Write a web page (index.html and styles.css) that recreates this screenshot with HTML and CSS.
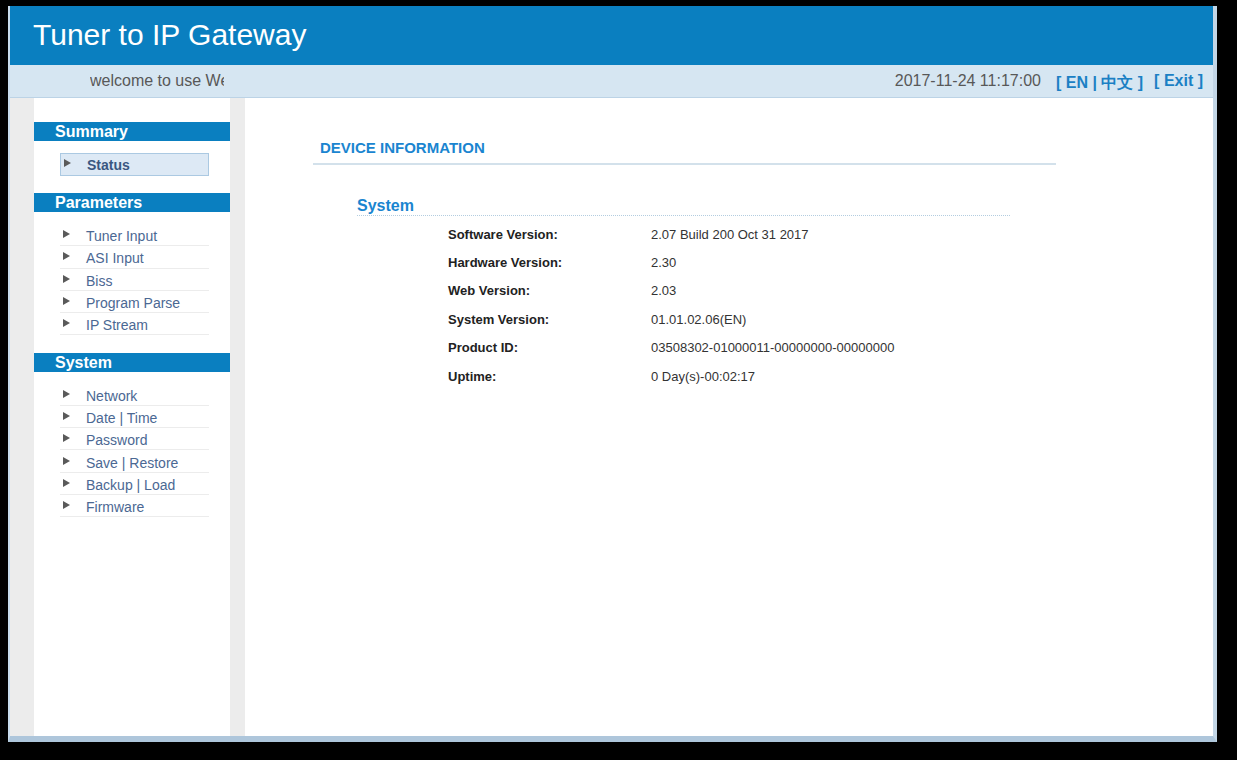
FILE: index.html
```html
<!DOCTYPE html>
<html>
<head>
<meta charset="utf-8">
<title>Tuner to IP Gateway</title>
<link rel="stylesheet" href="styles.css">
</head>
<body>
<div class="window">
  <div class="header"><span class="title">Tuner to IP Gateway</span></div>
  <div class="welcome">
    <div class="marquee"><span>welcome to use Web Management System</span></div>
    <div class="status-right">
      <span class="datetime">2017-11-24 11:17:00</span>
      <span class="lang">[ EN | 中文 ]</span>
      <span class="exit">[ Exit ]</span>
    </div>
  </div>
  <div class="main">
    <div class="gutter-left"></div>
    <div class="sidebar">
      <div class="menu-head first">Summary</div>
      <div class="menu-active"><i class="arrow"></i><span>Status</span></div>
      <div class="menu-head">Parameters</div>
      <ul class="menu-list">
        <li><i class="arrow"></i><span>Tuner Input</span></li>
        <li><i class="arrow"></i><span>ASI Input</span></li>
        <li><i class="arrow"></i><span>Biss</span></li>
        <li><i class="arrow"></i><span>Program Parse</span></li>
        <li><i class="arrow"></i><span>IP Stream</span></li>
      </ul>
      <div class="menu-head sys">System</div>
      <ul class="menu-list">
        <li><i class="arrow"></i><span>Network</span></li>
        <li><i class="arrow"></i><span>Date | Time</span></li>
        <li><i class="arrow"></i><span>Password</span></li>
        <li><i class="arrow"></i><span>Save | Restore</span></li>
        <li><i class="arrow"></i><span>Backup | Load</span></li>
        <li><i class="arrow"></i><span>Firmware</span></li>
      </ul>
    </div>
    <div class="gutter-mid"></div>
    <div class="content">
      <div class="section-title">DEVICE INFORMATION</div>
      <div class="sub-title">System</div>
      <div class="info">
        <div class="row"><span class="label">Software Version:</span><span class="value">2.07 Build 200 Oct 31 2017</span></div>
        <div class="row"><span class="label">Hardware Version:</span><span class="value">2.30</span></div>
        <div class="row"><span class="label">Web Version:</span><span class="value">2.03</span></div>
        <div class="row"><span class="label">System Version:</span><span class="value">01.01.02.06(EN)</span></div>
        <div class="row"><span class="label">Product ID:</span><span class="value">03508302-01000011-00000000-00000000</span></div>
        <div class="row"><span class="label">Uptime:</span><span class="value">0 Day(s)-00:02:17</span></div>
      </div>
    </div>
  </div>
</div>
</body>
</html>
```
FILE: styles.css
```css
* { box-sizing: border-box; }
html, body { margin: 0; padding: 0; }
body {
  background: #000;
  font-family: "Liberation Sans", Arial, sans-serif;
  width: 1237px;
  height: 760px;
  overflow: hidden;
}
.window {
  margin: 6px 0 0 8px;
  width: 1209px;
  height: 736px;
  border-left: 2px solid #c9dced;
  border-right: 4px solid #c3d6e6;
  border-bottom: 6px solid #aec6db;
  display: flex;
  flex-direction: column;
  background: #fff;
}
.header {
  height: 59px;
  background: #0a7fc0;
  padding-left: 23px;
  display: flex;
  align-items: center;
}
.title {
  color: #fff;
  font-size: 30px;
  line-height: 34px;
  padding-bottom: 2px;
}
.welcome {
  height: 33px;
  background: #d6e6f2;
  border-bottom: 1px solid #bcd3e6;
  display: flex;
  align-items: center;
  justify-content: space-between;
  font-size: 16px;
  color: #585858;
}
.marquee {
  margin-left: 80px;
  width: 134px;
  overflow: hidden;
  white-space: nowrap;
}
.status-right {
  display: flex;
  align-items: center;
  padding-right: 10px;
  white-space: nowrap;
}
.datetime { margin-right: 15px; }
.lang, .exit {
  color: #1b80c4;
  font-weight: bold;
}
.lang { margin-right: 11px; position: relative; top: 2px; }
.exit { position: relative; top: 0; }
.main {
  flex: 1;
  display: flex;
}
.gutter-left {
  width: 24px;
  background: #ececec;
}
.sidebar {
  width: 196px;
  background: #fff;
}
.gutter-mid {
  width: 15px;
  background: #ececec;
}
.content {
  flex: 1;
  background: #fff;
}
.menu-head {
  height: 19px;
  background: #0a7fc0;
  color: #fff;
  font-weight: bold;
  font-size: 16px;
  line-height: 19px;
  padding-left: 21px;
  margin-top: 17px;
}
.menu-head.first { margin-top: 24px; }
.menu-head.sys { margin-top: 18px; }
.menu-active {
  margin: 12px 0 0 26px;
  width: 149px;
  height: 23px;
  background: #dde9f5;
  border: 1px solid #abc9e2;
  display: flex;
  align-items: center;
  padding-left: 3px;
  font-size: 14px;
  font-weight: bold;
  color: #3a5781;
}
.arrow {
  display: inline-block;
  width: 0;
  height: 0;
  border-left: 7px solid #5a5a5a;
  border-top: 4.5px solid transparent;
  border-bottom: 4.5px solid transparent;
  margin-right: 16px;
  position: relative;
  top: -2px;
}
.menu-list {
  list-style: none;
  margin: 12px 0 0 26px;
  padding: 0;
  width: 149px;
}
.sys + .menu-list { margin-top: 11px; }
.menu-list li {
  height: 22.3px;
  border-bottom: 1px solid #ececec;
  display: flex;
  align-items: center;
  padding: 3px 0 0 3px;
  font-size: 14px;
  color: #4b6893;
}
.section-title {
  margin: 41px 0 0 68px;
  width: 743px;
  padding: 0 0 6px 7px;
  border-bottom: 2px solid #d3e1eb;
  color: #1a85d0;
  font-weight: bold;
  font-size: 15px;
  line-height: 18px;
}
.sub-title {
  margin: 31px 0 0 112px;
  width: 653px;
  border-bottom: 1px dotted #b3cde0;
  color: #1a85d0;
  font-weight: bold;
  font-size: 16px;
  line-height: 19px;
}
.info {
  margin: 4px 0 0 203px;
}
.row {
  display: flex;
  height: 28.4px;
  align-items: center;
  font-size: 13px;
}
.label {
  width: 203px;
  font-weight: bold;
  color: #222;
}
.value {
  color: #333;
}
```
